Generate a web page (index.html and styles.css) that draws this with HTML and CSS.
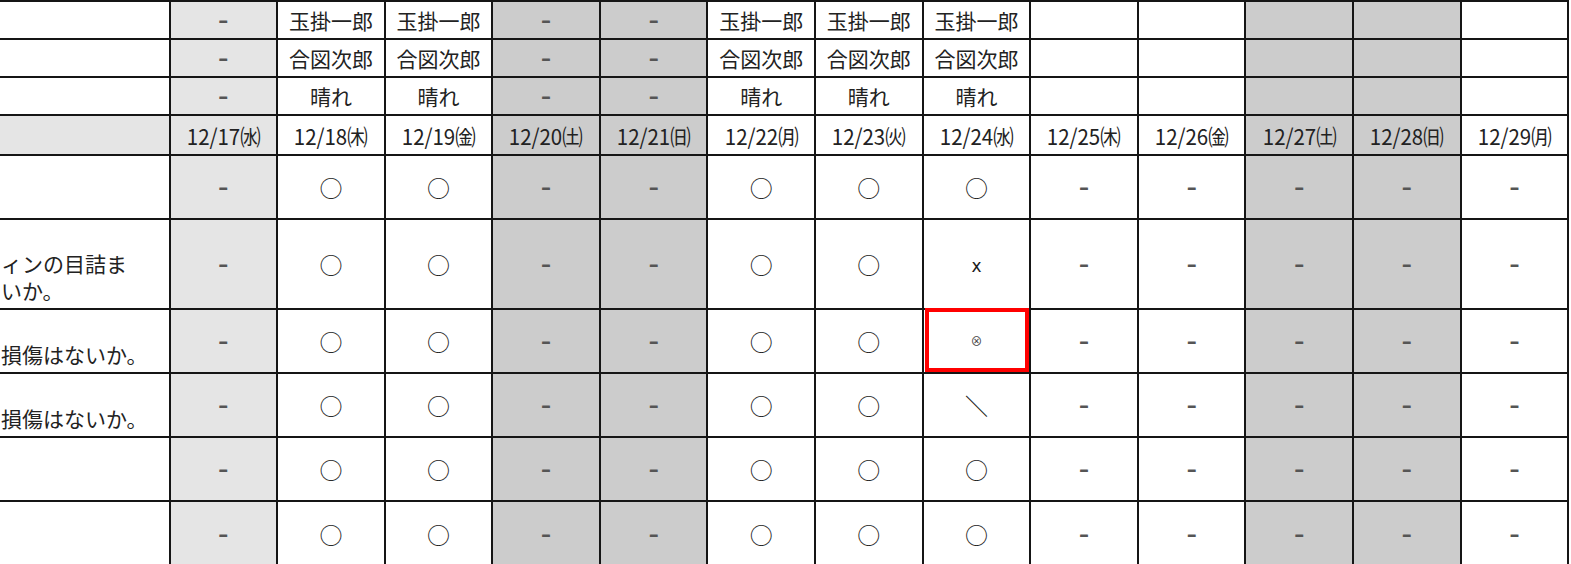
FILE: index.html
```html
<!DOCTYPE html>
<html lang="ja">
<head>
<meta charset="utf-8">
<title>点検表</title>
<link rel="stylesheet" href="styles.css">
</head>
<body>
<div class="sheet" role="table">
  <!-- row 1: inspector -->
  <div class="c lbl"></div>
  <div class="c lt"><span class="dash">–</span></div>
  <div class="c">玉掛一郎</div>
  <div class="c">玉掛一郎</div>
  <div class="c wk"><span class="dash">–</span></div>
  <div class="c wk"><span class="dash">–</span></div>
  <div class="c">玉掛一郎</div>
  <div class="c">玉掛一郎</div>
  <div class="c">玉掛一郎</div>
  <div class="c"></div>
  <div class="c"></div>
  <div class="c wk"></div>
  <div class="c wk"></div>
  <div class="c"></div>
  <!-- row 2: signaller -->
  <div class="c lbl"></div>
  <div class="c lt"><span class="dash">–</span></div>
  <div class="c">合図次郎</div>
  <div class="c">合図次郎</div>
  <div class="c wk"><span class="dash">–</span></div>
  <div class="c wk"><span class="dash">–</span></div>
  <div class="c">合図次郎</div>
  <div class="c">合図次郎</div>
  <div class="c">合図次郎</div>
  <div class="c"></div>
  <div class="c"></div>
  <div class="c wk"></div>
  <div class="c wk"></div>
  <div class="c"></div>
  <!-- row 3: weather -->
  <div class="c lbl"></div>
  <div class="c lt"><span class="dash">–</span></div>
  <div class="c">晴れ</div>
  <div class="c">晴れ</div>
  <div class="c wk"><span class="dash">–</span></div>
  <div class="c wk"><span class="dash">–</span></div>
  <div class="c">晴れ</div>
  <div class="c">晴れ</div>
  <div class="c">晴れ</div>
  <div class="c"></div>
  <div class="c"></div>
  <div class="c wk"></div>
  <div class="c wk"></div>
  <div class="c"></div>
  <!-- row 4: dates -->
  <div class="c lbl lt"></div>
  <div class="c lt date"><span class="d">12/17㈬</span></div>
  <div class="c date"><span class="d">12/18㈭</span></div>
  <div class="c date"><span class="d">12/19㈮</span></div>
  <div class="c wk date"><span class="d">12/20㈯</span></div>
  <div class="c wk date"><span class="d">12/21㈰</span></div>
  <div class="c date"><span class="d">12/22㈪</span></div>
  <div class="c date"><span class="d">12/23㈫</span></div>
  <div class="c date"><span class="d">12/24㈬</span></div>
  <div class="c date"><span class="d">12/25㈭</span></div>
  <div class="c date"><span class="d">12/26㈮</span></div>
  <div class="c wk date"><span class="d">12/27㈯</span></div>
  <div class="c wk date"><span class="d">12/28㈰</span></div>
  <div class="c date"><span class="d">12/29㈪</span></div>
  <!-- row 5 -->
  <div class="c lbl"></div>
  <div class="c lt"><span class="dash">–</span></div>
  <div class="c mk">○</div>
  <div class="c mk">○</div>
  <div class="c wk"><span class="dash">–</span></div>
  <div class="c wk"><span class="dash">–</span></div>
  <div class="c mk">○</div>
  <div class="c mk">○</div>
  <div class="c mk">○</div>
  <div class="c"><span class="dash">–</span></div>
  <div class="c"><span class="dash">–</span></div>
  <div class="c wk"><span class="dash">–</span></div>
  <div class="c wk"><span class="dash">–</span></div>
  <div class="c"><span class="dash">–</span></div>
  <!-- row 6 -->
  <div class="c lbl">ィンの目詰ま<br>いか。</div>
  <div class="c lt"><span class="dash">–</span></div>
  <div class="c mk">○</div>
  <div class="c mk">○</div>
  <div class="c wk"><span class="dash">–</span></div>
  <div class="c wk"><span class="dash">–</span></div>
  <div class="c mk">○</div>
  <div class="c mk">○</div>
  <div class="c ng">x</div>
  <div class="c"><span class="dash">–</span></div>
  <div class="c"><span class="dash">–</span></div>
  <div class="c wk"><span class="dash">–</span></div>
  <div class="c wk"><span class="dash">–</span></div>
  <div class="c"><span class="dash">–</span></div>
  <!-- row 7 -->
  <div class="c lbl">損傷はないか。</div>
  <div class="c lt"><span class="dash">–</span></div>
  <div class="c mk">○</div>
  <div class="c mk">○</div>
  <div class="c wk"><span class="dash">–</span></div>
  <div class="c wk"><span class="dash">–</span></div>
  <div class="c mk">○</div>
  <div class="c mk">○</div>
  <div class="c sel"><span class="fix">⊗</span></div>
  <div class="c"><span class="dash">–</span></div>
  <div class="c"><span class="dash">–</span></div>
  <div class="c wk"><span class="dash">–</span></div>
  <div class="c wk"><span class="dash">–</span></div>
  <div class="c"><span class="dash">–</span></div>
  <!-- row 8 -->
  <div class="c lbl">損傷はないか。</div>
  <div class="c lt"><span class="dash">–</span></div>
  <div class="c mk">○</div>
  <div class="c mk">○</div>
  <div class="c wk"><span class="dash">–</span></div>
  <div class="c wk"><span class="dash">–</span></div>
  <div class="c mk">○</div>
  <div class="c mk">○</div>
  <div class="c mk">＼</div>
  <div class="c"><span class="dash">–</span></div>
  <div class="c"><span class="dash">–</span></div>
  <div class="c wk"><span class="dash">–</span></div>
  <div class="c wk"><span class="dash">–</span></div>
  <div class="c"><span class="dash">–</span></div>
  <!-- row 9 -->
  <div class="c lbl"></div>
  <div class="c lt"><span class="dash">–</span></div>
  <div class="c mk">○</div>
  <div class="c mk">○</div>
  <div class="c wk"><span class="dash">–</span></div>
  <div class="c wk"><span class="dash">–</span></div>
  <div class="c mk">○</div>
  <div class="c mk">○</div>
  <div class="c mk">○</div>
  <div class="c"><span class="dash">–</span></div>
  <div class="c"><span class="dash">–</span></div>
  <div class="c wk"><span class="dash">–</span></div>
  <div class="c wk"><span class="dash">–</span></div>
  <div class="c"><span class="dash">–</span></div>
  <!-- row 10 -->
  <div class="c lbl"></div>
  <div class="c lt"><span class="dash">–</span></div>
  <div class="c mk">○</div>
  <div class="c mk">○</div>
  <div class="c wk"><span class="dash">–</span></div>
  <div class="c wk"><span class="dash">–</span></div>
  <div class="c mk">○</div>
  <div class="c mk">○</div>
  <div class="c mk">○</div>
  <div class="c"><span class="dash">–</span></div>
  <div class="c"><span class="dash">–</span></div>
  <div class="c wk"><span class="dash">–</span></div>
  <div class="c wk"><span class="dash">–</span></div>
  <div class="c"><span class="dash">–</span></div>
</div>
</body>
</html>
```
FILE: styles.css
```css
html, body {
  margin: 0;
  padding: 0;
  background: #ffffff;
  overflow: hidden;
}

body {
  font-family: "Noto Sans CJK JP", "Noto Sans", sans-serif;
  color: #222222;
  font-size: 21px;
}

.sheet {
  display: grid;
  grid-template-columns: 168.5px repeat(13, 105.6px);
  grid-template-rows: 36px 36px 36px 38px 62px 88px 62px 62px 62px 64px;
  gap: 2px;
  padding: 2px 2px 0 0;
  width: max-content;
  background: #151515;
}

.c {
  background: #ffffff;
  display: flex;
  align-items: center;
  justify-content: center;
  line-height: 1;
  white-space: nowrap;
  overflow: hidden;
  position: relative;
}

.lt { background: #e5e5e5; }
.wk { background: #cccccc; }

.lbl {
  justify-content: flex-start;
  align-items: flex-end;
  text-align: left;
  line-height: 27px;
  padding: 0 0 4px 1px;
  white-space: normal;
}

.dash {
  color: #555555;
  font-family: "DejaVu Sans", sans-serif;
  font-size: 20px;
  font-weight: bold;
}

.date .d {
  display: inline-block;
  font-size: 22px;
  transform: scaleX(0.93);
  letter-spacing: 0;
}

.mk {
  font-size: 23px;
}

.ng {
  font-family: "DejaVu Sans", sans-serif;
  font-size: 17px;
  padding-top: 5px;
  color: #1a1a1a;
}

.fix {
  font-size: 12px;
  color: #444444;
}

.sel { overflow: visible; }

.sel::after {
  content: "";
  position: absolute;
  top: -2px;
  left: 1px;
  right: 0;
  bottom: 0;
  border: 4px solid #ff0000;
}
```
